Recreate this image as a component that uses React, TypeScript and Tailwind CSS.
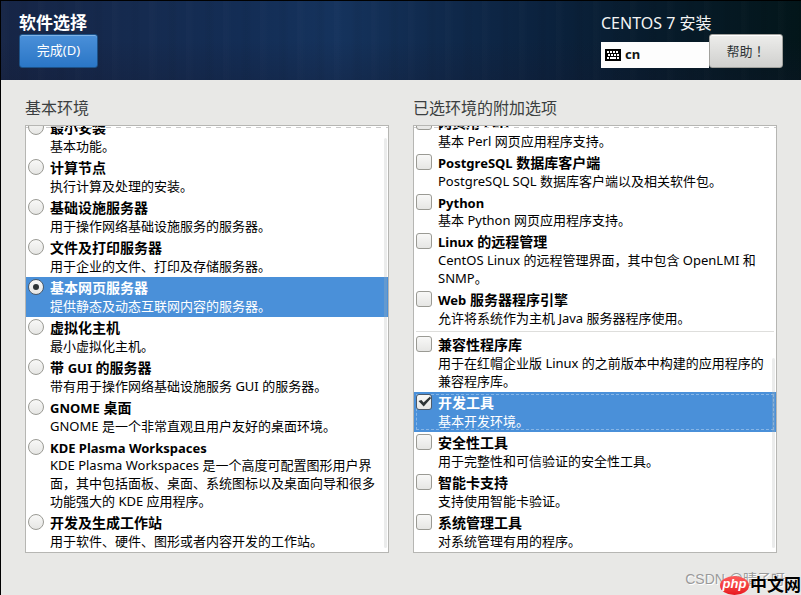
import { type ReactNode } from "react";
import clsx from "clsx";

type Item = { title: string; desc: string; latin?: boolean; checked?: boolean; divider?: boolean };

const environments: Item[] = [
  { title: "最小安装", desc: "基本功能。" },
  { title: "计算节点", desc: "执行计算及处理的安装。" },
  { title: "基础设施服务器", desc: "用于操作网络基础设施服务的服务器。" },
  { title: "文件及打印服务器", desc: "用于企业的文件、打印及存储服务器。" },
  { title: "基本网页服务器", desc: "提供静态及动态互联网内容的服务器。", checked: true },
  { title: "虚拟化主机", desc: "最小虚拟化主机。" },
  { title: "带 GUI 的服务器", desc: "带有用于操作网络基础设施服务 GUI 的服务器。" },
  { title: "GNOME 桌面", desc: "GNOME 是一个非常直观且用户友好的桌面环境。" },
  {
    title: "KDE Plasma Workspaces",
    desc: "KDE Plasma Workspaces 是一个高度可配置图形用户界面，其中包括面板、桌面、系统图标以及桌面向导和很多功能强大的 KDE 应用程序。",
    latin: true,
  },
  { title: "开发及生成工作站", desc: "用于软件、硬件、图形或者内容开发的工作站。" },
];

const addons: Item[] = [
  { title: "网页用 Perl", desc: "基本 Perl 网页应用程序支持。" },
  { title: "PostgreSQL 数据库客户端", desc: "PostgreSQL SQL 数据库客户端以及相关软件包。" },
  { title: "Python", desc: "基本 Python 网页应用程序支持。", latin: true },
  { title: "Linux 的远程管理", desc: "CentOS Linux 的远程管理界面，其中包含 OpenLMI 和 SNMP。" },
  { title: "Web 服务器程序引擎", desc: "允许将系统作为主机 Java 服务器程序使用。", divider: true },
  { title: "兼容性程序库", desc: "用于在红帽企业版 Linux 的之前版本中构建的应用程序的兼容程序库。" },
  { title: "开发工具", desc: "基本开发环境。", checked: true },
  { title: "安全性工具", desc: "用于完整性和可信验证的安全性工具。" },
  { title: "智能卡支持", desc: "支持使用智能卡验证。" },
  { title: "系统管理工具", desc: "对系统管理有用的程序。" },
];

// Bold Latin runs are set one size smaller than the Chinese around them
function Title({ text }: { text: string }) {
  return text.split(/([A-Za-z][A-Za-z ]*[A-Za-z])/).map((part, i) =>
    i % 2 ? (
      <span key={i} className="text-[13px]">
        {part}
      </span>
    ) : (
      part
    ),
  );
}

function Row({ item, type }: { item: Item; type: "radio" | "checkbox" }) {
  const radio = type === "radio";
  return (
    <>
      <label
        className={clsx(
          "relative flex gap-1.5 py-0.5 pl-0.5 pr-2",
          item.checked ? "bg-[#4a90d9] text-white" : "text-black",
        )}
      >
        {item.checked && !radio && (
          <span className="pointer-events-none absolute inset-0.5 border border-dashed border-[#86b5e6]" />
        )}
        <span className="z-10 grid h-4 w-4 shrink-0">
          <input
            type={type}
            name={radio ? "environment" : undefined}
            defaultChecked={item.checked}
            className={clsx(
              "peer col-start-1 row-start-1 h-4 w-4 appearance-none border bg-linear-to-b from-[#f8f8f7] to-[#e6e6e4]",
              radio ? "rounded-full" : "rounded-[3px]",
              item.checked ? "border-[#4c5a6a]" : "border-[#9a9a94]",
            )}
          />
          {radio ? (
            <span className="pointer-events-none col-start-1 row-start-1 m-auto hidden h-1.5 w-1.5 rounded-full bg-[#2e3436] peer-checked:block" />
          ) : (
            <svg viewBox="0 0 16 16" className="pointer-events-none col-start-1 row-start-1 hidden h-4 w-4 peer-checked:block">
              <path d="M2.5 7L5.5 6l2 2.5L14 2.5l1 1.8-7.3 8.2z" fill="#2e3436" />
            </svg>
          )}
        </span>
        <span className="min-w-0">
          <span className={clsx("block text-[14px] font-bold", item.latin ? "h-[17px] leading-[17px]" : "h-[18px] leading-[18px]")}>
            <Title text={item.title} />
          </span>
          <span className="block text-[13px] leading-[18px]">{item.desc}</span>
        </span>
      </label>
      {item.divider && <div className="m-0.5 h-px bg-[#dededc]" />}
    </>
  );
}

function Panel({ title, bar, children }: { title: string; bar: string; children: ReactNode }) {
  return (
    <section className="min-w-0 flex-1">
      <h2 className="mb-[5px] text-[16px] leading-6 text-[#3b3f40]">{title}</h2>
      <div className="relative overflow-hidden border border-[#b6b6b3] bg-white">
        {children}
        <div className="absolute inset-x-0 top-px h-px bg-[repeating-linear-gradient(90deg,#cbcbcb_0_5px,transparent_5px_10px)]" />
        <div className={clsx("absolute right-px bottom-1 w-[3px] rounded-full bg-[#b0b5b5]/25", bar)} />
      </div>
    </section>
  );
}

function KeyboardIcon() {
  return (
    <svg viewBox="0 0 16 12" className="h-3 w-4" shapeRendering="crispEdges" aria-hidden="true">
      <rect width="16" height="12" fill="#000" />
      <path d="M2 3h12" stroke="#fff" strokeWidth="2" strokeDasharray="2 1" />
      <path d="M3 6h11" stroke="#fff" strokeWidth="2" strokeDasharray="2 1" />
      <path d="M2 9h2M5 9h6M12 9h2" stroke="#fff" strokeWidth="2" />
      <path d="M1 4.5h14M1 7.5h14" stroke="#000" />
    </svg>
  );
}

export default function App() {
  return (
    <div className="relative min-h-screen overflow-x-hidden border-t border-l border-black bg-[#e8e8e6] font-['Noto_Sans','Noto_Sans_CJK_SC',sans-serif]">
      <header className="flex h-[79px] items-start justify-between bg-[linear-gradient(180deg,transparent_50%,#14182e40_100%),repeating-linear-gradient(90deg,#ffffff03_0_4px,transparent_9px_17px,#00000008_22px_25px,transparent_29px_37px),linear-gradient(90deg,#162546_0%,#152b50_18%,#132d55_30%,#15335d_42%,#102a4d_54%,#0b223e_68%,#071b2b_82%,#03161a_100%)] px-[18px] pt-2.5">
        <div>
          <h1 className="text-[17px] leading-6 font-bold text-white">软件选择</h1>
          <button className="-mt-px h-[34px] w-[79px] rounded-[3px] border border-[#1c5187] bg-linear-to-b from-[#4a90d9] to-[#2a76c6] text-[13px] text-white inset-shadow-[0_1px_#7fb2e6]">
            完成(D)
          </button>
        </div>
        <div>
          <div className="text-[16px] leading-6 text-[#f4f4f4]">CENTOS 7 安装</div>
          <div className="-mt-px flex items-end">
            <div className="flex h-[26px] w-[108px] items-center gap-1 bg-[#fdfdfd] pl-1 text-[13px] font-bold text-[#101414]">
              <KeyboardIcon />
              cn
            </div>
            <button className="h-[34px] w-[74px] rounded-[3px] border border-[#a1a19d] bg-linear-to-b from-[#ededeb] to-[#d0d0ce] font-['Noto_Sans_CJK_TC',sans-serif] text-[13px] text-[#2e3436] inset-shadow-[0_1px_#ffffff]">
              帮助！
            </button>
          </div>
        </div>
      </header>

      <main className="flex items-start gap-6 px-6 pt-4 pb-10">
        <Panel title="基本环境" bar="top-3">
          <div className="-mt-[9px]">
            {environments.map((e) => (
              <Row key={e.title} item={e} type="radio" />
            ))}
          </div>
        </Panel>
        <Panel title="已选环境的附加选项" bar="top-[232px]">
          <div className="-mt-3.5">
            {addons.map((a) => (
              <Row key={a.title} item={a} type="checkbox" />
            ))}
          </div>
        </Panel>
      </main>

      {/* Watermarks */}
      <div className="absolute right-4 bottom-1.5 font-['Liberation_Sans','Noto_Sans_CJK_SC',sans-serif] text-[14px] leading-5 text-[#9a9a9a] text-shadow-[1px_1px_#ffffff]">
        CSDN @晴子呀
      </div>
      <div className="absolute right-0 bottom-0 flex items-center gap-px">
        <span className="flex h-[19px] w-[29px] items-center justify-center rounded-[50%] bg-linear-to-b from-[#ff5a5a] to-[#e8141e] pb-0.5 font-['Liberation_Sans',sans-serif] text-[13px] leading-4 font-bold text-white italic">
          php
        </span>
        <span className="text-[17px] leading-5 font-bold text-black text-shadow-[0_0_1px_#ffffff]">中文网</span>
      </div>
    </div>
  );
}
